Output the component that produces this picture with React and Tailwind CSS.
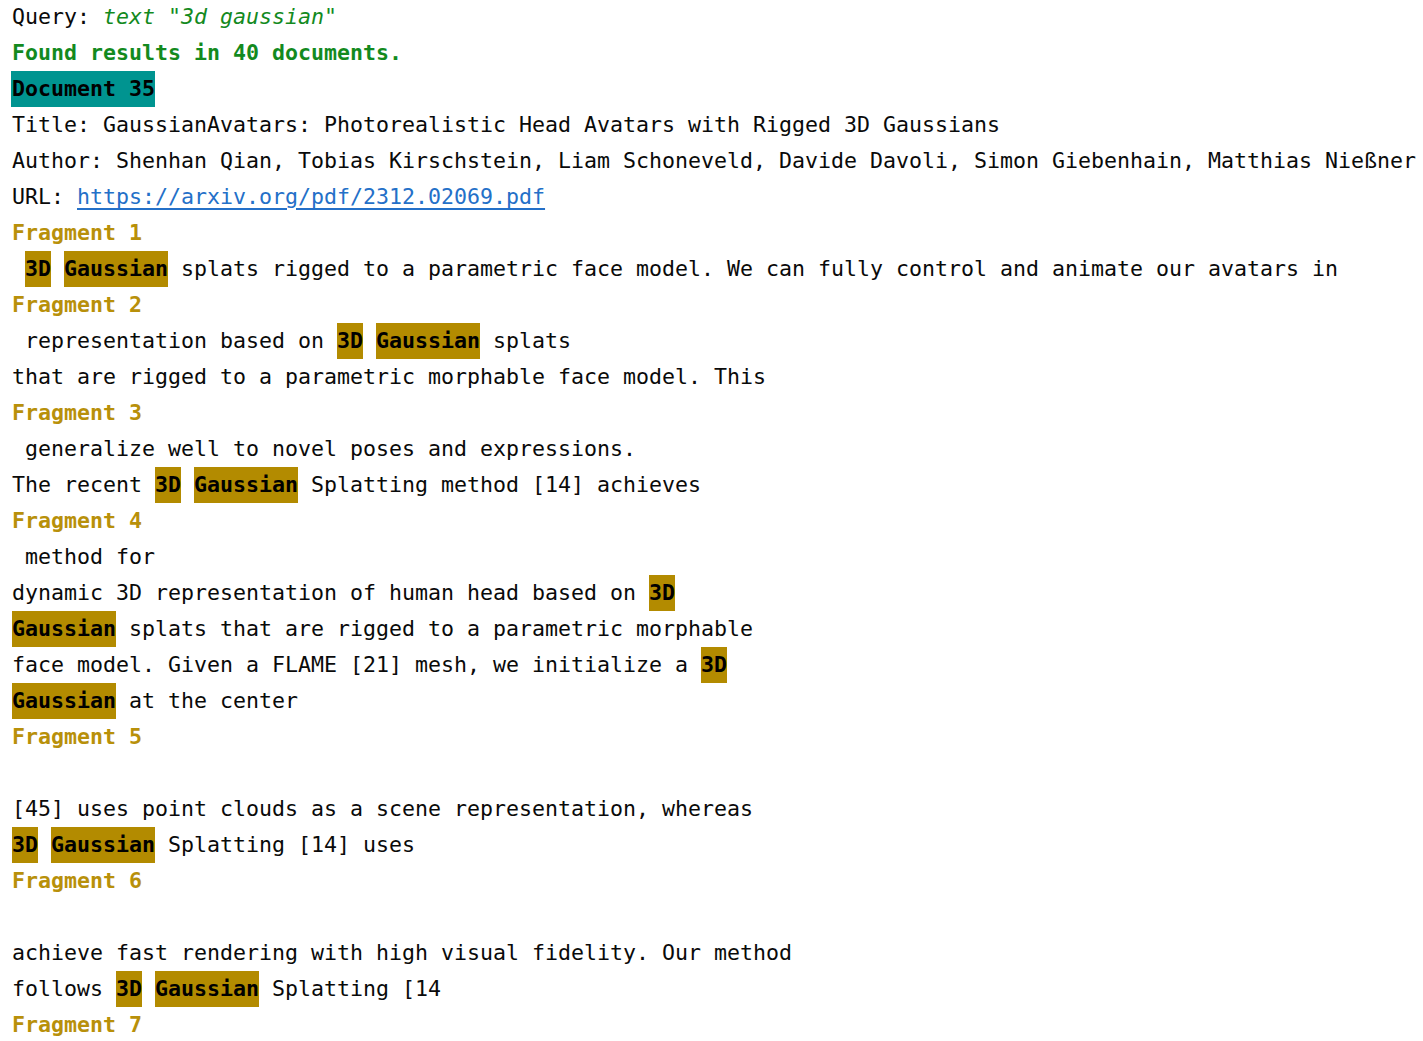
const hl = (w) => (
  <span className="inline-block bg-[#B38B00] font-bold text-black leading-9">{w}</span>
);

// split a line on the highlighted words
function Line({ text, className = '' }) {
  const parts = text.split(/(\[\[[^\]]+\]\])/g);
  return (
    <div className={`h-9 leading-9 whitespace-pre ${className}`}>
      {parts.map((p, i) =>
        p.startsWith('[[') ? <span key={i}>{hl(p.slice(2, -2))}</span> : <span key={i}>{p}</span>
      )}
    </div>
  );
}

const Fragment = ({ n }) => (
  <div className="h-9 leading-9 font-bold text-[#B8900A]">Fragment {n}</div>
);

export default function App() {
  return (
    <div
      className="h-[1041px] overflow-hidden bg-white pl-3 -mt-px text-[21.6px] text-[#0a0a0a]"
      style={{ fontFamily: '"DejaVu Sans Mono", "Liberation Mono", monospace' }}
    >
      <div className="h-9 leading-9 whitespace-pre">
        Query: <span className="italic text-[#138A1E]">text "3d gaussian"</span>
      </div>
      <div className="h-9 leading-9 font-bold text-[#138A1E]">Found results in 40 documents.</div>
      <div className="h-9 leading-9">
        <span className="inline-block bg-[#009490] font-bold text-black leading-9 -ml-px pl-px">Document 35</span>
      </div>
      <Line text="Title: GaussianAvatars: Photorealistic Head Avatars with Rigged 3D Gaussians" />
      <Line text="Author: Shenhan Qian, Tobias Kirschstein, Liam Schoneveld, Davide Davoli, Simon Giebenhain, Matthias Nießner" />
      <div className="h-9 leading-9 whitespace-pre">
        URL: <span className="text-[#2470C8] underline underline-offset-4">https://arxiv.org/pdf/2312.02069.pdf</span>
      </div>
      <Fragment n={1} />
      <Line text=" [[3D]] [[Gaussian]] splats rigged to a parametric face model. We can fully control and animate our avatars in" />
      <Fragment n={2} />
      <Line text=" representation based on [[3D]] [[Gaussian]] splats" />
      <Line text="that are rigged to a parametric morphable face model. This" />
      <Fragment n={3} />
      <Line text=" generalize well to novel poses and expressions." />
      <Line text="The recent [[3D]] [[Gaussian]] Splatting method [14] achieves" />
      <Fragment n={4} />
      <Line text=" method for" />
      <Line text="dynamic 3D representation of human head based on [[3D]]" />
      <Line text="[[Gaussian]] splats that are rigged to a parametric morphable" />
      <Line text="face model. Given a FLAME [21] mesh, we initialize a [[3D]]" />
      <Line text="[[Gaussian]] at the center" />
      <Fragment n={5} />
      <Line text="" />
      <Line text="[45] uses point clouds as a scene representation, whereas" />
      <Line text="[[3D]] [[Gaussian]] Splatting [14] uses" />
      <Fragment n={6} />
      <Line text="" />
      <Line text="achieve fast rendering with high visual fidelity. Our method" />
      <Line text="follows [[3D]] [[Gaussian]] Splatting [14" />
      <Fragment n={7} />
    </div>
  );
}
